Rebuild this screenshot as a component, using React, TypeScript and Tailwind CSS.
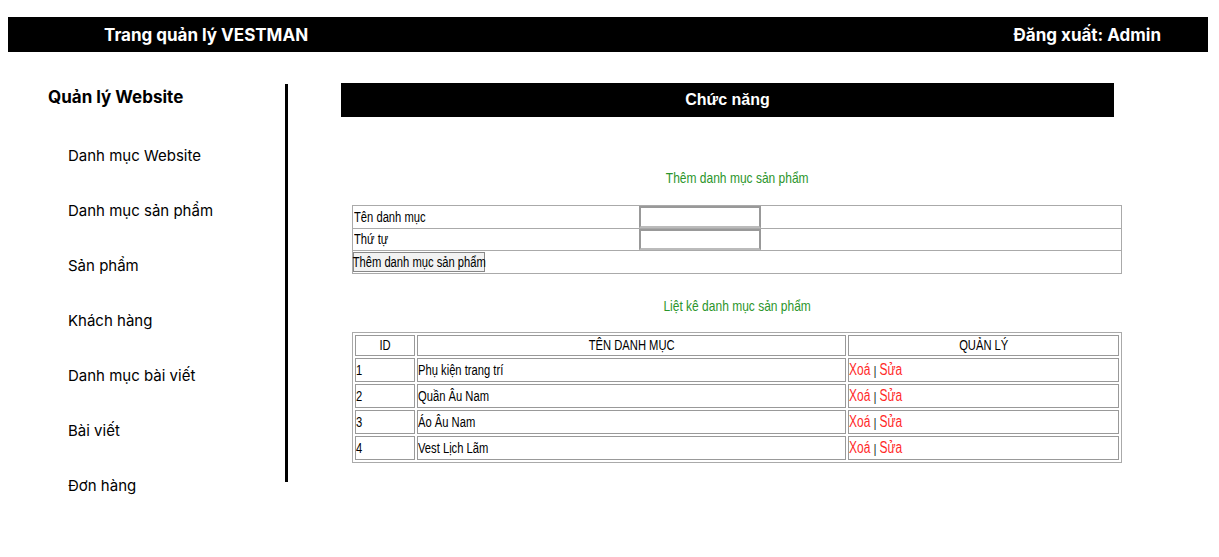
import React from "react";

const menu = [
  "Danh mục Website",
  "Danh mục sản phẩm",
  "Sản phẩm",
  "Khách hàng",
  "Danh mục bài viết",
  "Bài viết",
  "Đơn hàng",
];

const categories = [
  { id: 1, name: "Phụ kiện trang trí" },
  { id: 2, name: "Quần Âu Nam" },
  { id: 3, name: "Áo Âu Nam" },
  { id: 4, name: "Vest Lịch Lãm" },
];

// condensed look: the screenshot uses a narrow font, none installed, so squeeze Liberation Sans
function Narrow({ children, center }: { children: React.ReactNode; center?: boolean }) {
  return (
    <span className={"inline-block whitespace-nowrap scale-x-80 " + (center ? "origin-center" : "origin-left")}>
      {children}
    </span>
  );
}

export default function App() {
  return (
    <div className="w-[1219px] h-[557px] bg-white font-['Inter',sans-serif] text-black overflow-hidden">
      {/* top bar */}
      <div className="ml-2 mr-[11px] mt-[17px] h-[35px] bg-black flex items-center justify-between pl-[96px] pr-[47px] text-white font-bold text-[17px]">
        <span className="mt-0.5">Trang quản lý VESTMAN</span>
        <span className="mt-0.5">Đăng xuất: Admin</span>
      </div>

      <div className="flex">
        {/* sidebar */}
        <div className="w-[288px] mt-[32px] h-[398px] border-r-[3px] border-black pl-[48px]">
          <div className="h-6 leading-6 mt-px font-bold text-[17px]">Quản lý Website</div>
          <ul className="mt-[35px] pl-5 flex flex-col gap-[31px] text-[15px]">
            {menu.map((m) => (
              <li key={m} className="h-6 leading-6">{m}</li>
            ))}
          </ul>
        </div>

        {/* main */}
        <div className="ml-[53px] mt-[31px] font-['Liberation_Sans',sans-serif]">
          <div className="w-[773px] h-[34px] bg-black text-white flex items-center justify-center font-bold text-[16px]">
            Chức năng
          </div>

          <div className="ml-[11px] w-[770px]">
            <div className="mt-[52px] text-center text-[15px] text-[#2b952b] leading-[18px]">
              <Narrow center>Thêm danh mục sản phẩm</Narrow>
            </div>

            <div className="mt-[18px] border border-[#aaa] text-[14px]">
              <div className="flex h-[23px] border-b border-[#aaa]">
                <div className="w-[286px] pl-px leading-[22px]"><Narrow>Tên danh mục</Narrow></div>
                <div className="w-[122px] h-[22px] border-2 border-[#999] border-b-[#bbb]" />
              </div>
              <div className="flex h-[22px] border-b border-[#aaa]">
                <div className="w-[286px] pl-px leading-[21px]"><Narrow>Thứ tự</Narrow></div>
                <div className="w-[122px] h-[21px] border-2 border-[#999] border-b-[#bbb]" />
              </div>
              <div className="h-[22px] flex items-center">
                <button className="w-[132px] h-[20px] flex items-center justify-center border border-[#888] bg-[#f2f2f2] leading-[18px] text-[14px] overflow-visible">
                  <Narrow center>Thêm danh mục sản phẩm</Narrow>
                </button>
              </div>
            </div>

            <div className="mt-[23px] text-center text-[15px] text-[#2b952b] leading-[18px]">
              <Narrow center>Liệt kê danh mục sản phẩm</Narrow>
            </div>

            <table className="mt-[17px] w-[770px] border border-[#aaa] border-separate border-spacing-[2px] text-[14px]">
              <thead>
                <tr className="h-[21px]">
                  <th className="w-[60px] border border-[#999] font-normal leading-[17px]"><Narrow center>ID</Narrow></th>
                  <th className="w-[429px] border border-[#999] font-normal leading-[17px]"><Narrow center>TÊN DANH MỤC</Narrow></th>
                  <th className="border border-[#999] font-normal leading-[17px]"><Narrow center>QUẢN LÝ</Narrow></th>
                </tr>
              </thead>
              <tbody>
                {categories.map((c) => (
                  <tr key={c.id} className="h-[24px]">
                    <td className="border border-[#999] leading-[20px] text-left"><Narrow>{c.id}</Narrow></td>
                    <td className="border border-[#999] leading-[20px]"><Narrow>{c.name}</Narrow></td>
                    <td className="border border-[#999] leading-[20px] text-[16px]">
                      <span className="inline-block whitespace-nowrap scale-x-75 origin-left">
                        <span className="text-[#ff2a2a]">Xoá</span> <span className="text-[13px]">|</span> <span className="text-[#ff2a2a]">Sửa</span>
                      </span>
                    </td>
                  </tr>
                ))}
              </tbody>
            </table>
          </div>
        </div>
      </div>
    </div>
  );
}
